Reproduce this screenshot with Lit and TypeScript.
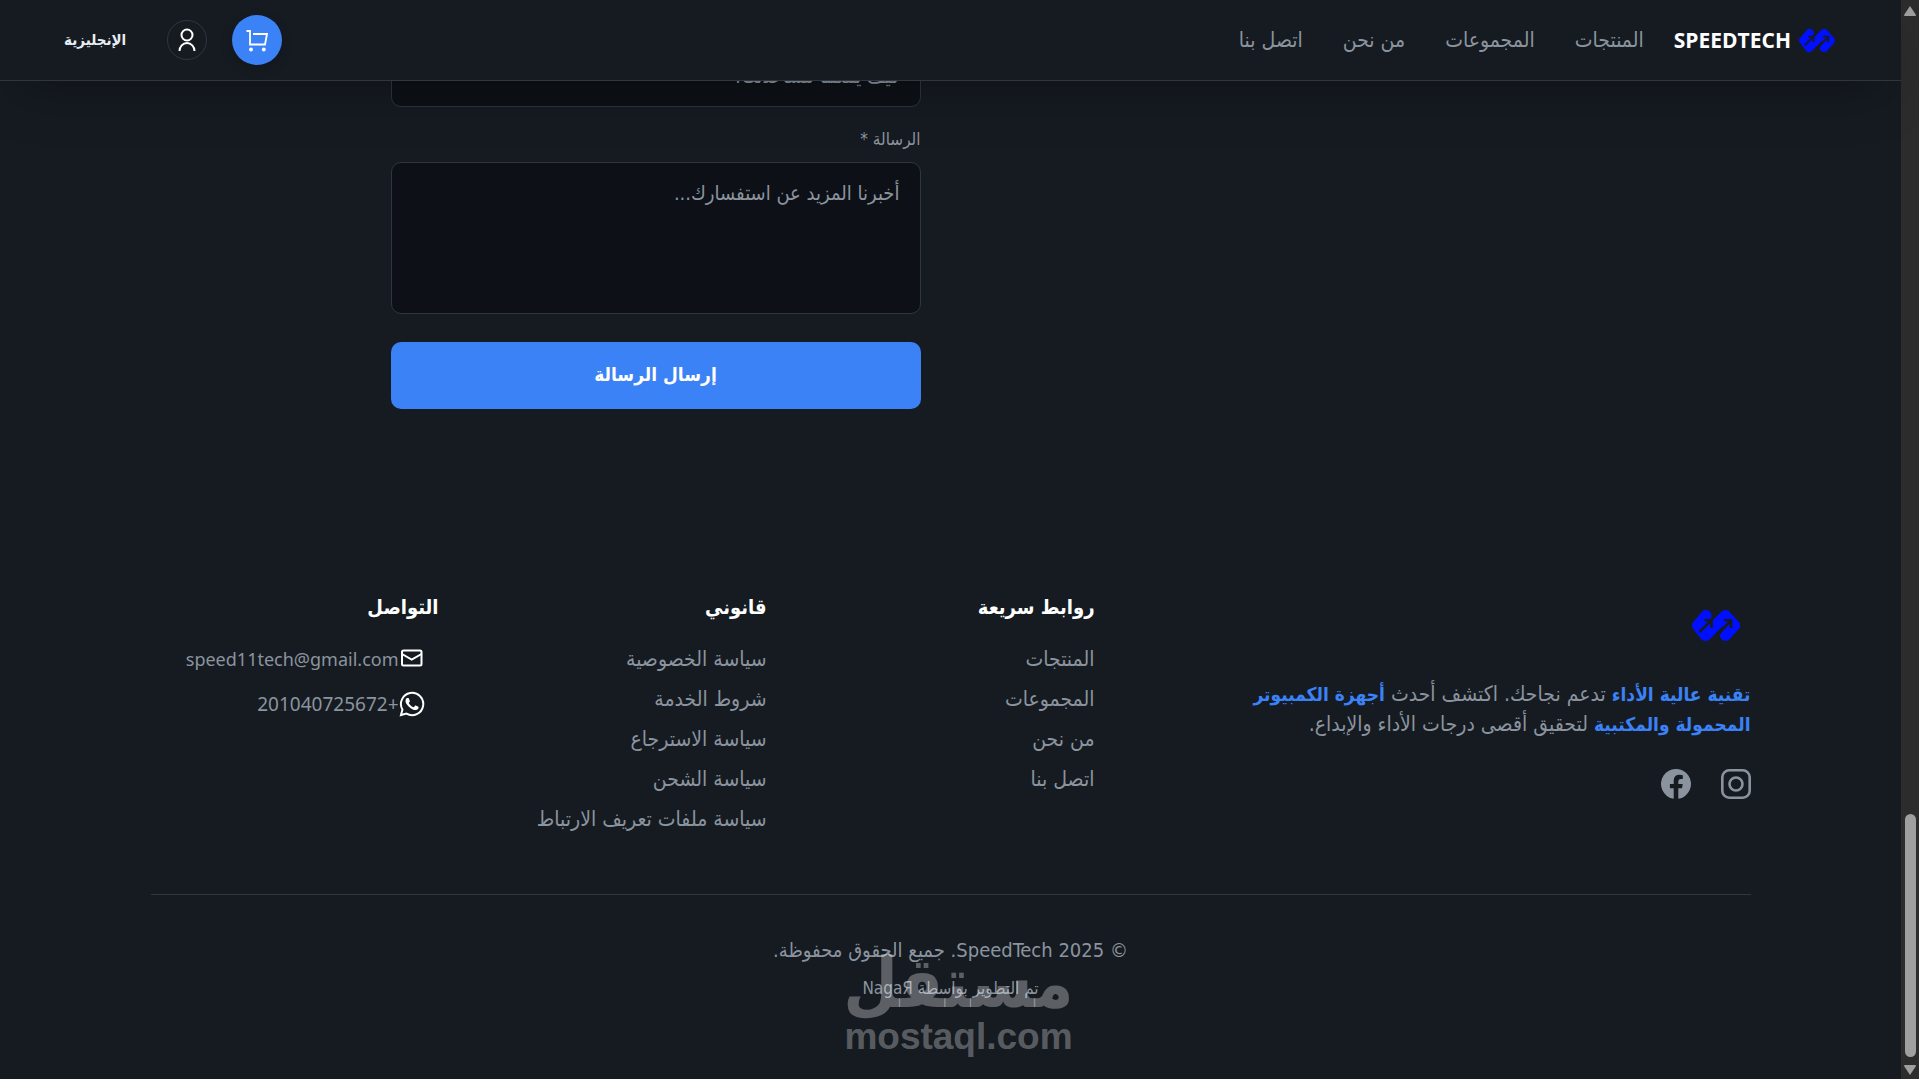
import { LitElement, html, css } from "lit";
import { customElement } from "lit/decorators.js";

const logo = html`<svg class="logo" viewBox="0 0 48 31" aria-hidden="true">
  <path d="M14 5.500 5.500 15.500 13.500 25.500 33.500 5.500 42.500 15.500 33.500 25.500" fill="none" stroke="#0010ff" stroke-width="11" stroke-linecap="round" stroke-linejoin="round"/>
  <path d="M6 15.500 14 6 17 12 12 25zM33 6 42 15.500 34 25 30 12z" fill="#0010ff"/>
  <g fill="none" stroke="#161b22" stroke-width="2.600"><path d="M7.500 22 18.500 11M12.500 10.300h7V18"/><path d="M24.500 26 38.500 11M32 10.300h7V18"/></g>
</svg>`;

@customElement("app-root")
export class AppRoot extends LitElement {
  static styles = css`
    :host {
      display: flex;
      height: 100vh;
      overflow: hidden;
      direction: rtl;
      background: #161b22;
      color: #8b949e;
      font-family: "DejaVu Sans Condensed", "DejaVu Sans", sans-serif;
      font-size: 21px;
      line-height: 30px;
    }
    * { box-sizing: border-box; }
    a { color: inherit; text-decoration: none; }
    svg { display: block; flex: none; }
    .page { flex: 1; min-width: 0; display: flex; flex-direction: column; }
    .header {
      position: relative;
      z-index: 1;
      flex: none;
      display: flex;
      justify-content: space-between;
      align-items: center;
      height: 81px;
      padding: 0 66px 0 64px;
      background: #161b22;
      border-bottom: 1px solid #30363d;
      box-shadow: 0 25px 50px -12px rgba(0, 0, 0, 0.25);
    }
    .main-nav, .brand, .actions, .links { display: flex; align-items: center; }
    .main-nav { gap: 30px; }
    .links { gap: 40px; }
    .brand { gap: 8px; color: #fff; font: bold 21px/30px "Open Sans", sans-serif; }
    .brand .logo { width: 36px; height: 23px; }
    .actions { gap: 25px; }
    .lang { margin-inline-start: 16px; padding: 0; border: 0; background: none; color: #e6edf3; font: bold 15px/30px "DejaVu Sans Condensed", "DejaVu Sans", sans-serif; }
    .round { display: grid; place-items: center; border-radius: 50%; padding: 0; color: #fff; }
    .cart { width: 50px; height: 50px; border: 0; background: #3b82f6; box-shadow: 0 4px 12px rgba(0, 0, 0, 0.2); }
    .user { width: 40px; height: 40px; border: 1px solid #30363d; background: none; }
    .body { flex: 1; min-height: 0; overflow: hidden; display: flex; flex-direction: column; justify-content: flex-end; }
    .contact { flex: none; width: 100%; max-width: 1120px; margin: 0 auto; display: grid; grid-template-columns: 1fr 1fr; column-gap: 60px; padding-bottom: 169px; }
    .form { grid-column: 2; display: flex; flex-direction: column; }
    .label { margin: 20px 0 10px; font-size: 17px; line-height: 25px; }
    .field { width: 100%; display: block; padding: 15px 20px; border: 1px solid #30363d; border-radius: 10px; background: #0d1117; color: #f0f6fc; font: inherit; font-size: 20px; line-height: 30px; resize: none; }
    .field::placeholder { color: #8b949e; opacity: 1; }
    .input { height: 62px; }
    .area { height: 152px; overflow: hidden; }
    .send { height: 67px; margin-top: 28px; padding: 0 0 4px; border: 0; border-radius: 10px; background: #3b82f6; color: #fff; font: bold 19px/30px "DejaVu Sans Condensed", "DejaVu Sans", sans-serif; }
    .footer { flex: none; width: 100%; max-width: 1600px; margin: 0 auto; }
    .columns { display: grid; grid-template-columns: repeat(5, 1fr); column-gap: 40px; padding: 12px 0 60px; border-bottom: 1px solid #30363d; }
    .about { grid-column: span 2; }
    .about .logo { width: 48px; height: 31px; margin: 20px 11px 38px; }
    .text { margin: 0; max-width: 500px; }
    .strong { color: #3b82f6; font-size: 19px; font-weight: bold; }
    .social { display: flex; gap: 30px; margin-top: 30px; }
    .title { margin: 0 0 20px; color: #fff; font-size: 20px; line-height: 34px; white-space: nowrap; }
    .list { margin: 0; padding: 0; list-style: none; display: grid; gap: 10px; white-space: nowrap; }
    .reach { gap: 15px; }
    .row { display: flex; align-items: center; padding-inline-start: 14px; font-family: "Noto Sans", sans-serif; font-size: 18px; }
    .phone { font-size: 19px; }
    .row svg { color: #fff; }
    .legal { position: relative; height: 184px; padding-top: 40px; text-align: center; }
    .legal p { margin: 0; font-size: 20px; }
    .legal .dev { padding-top: 8px; font-size: 17px; }
    .mark { position: absolute; top: 50px; left: 693px; width: 230px; color: rgba(255, 255, 255, 0.3); text-align: center; font-weight: bold; pointer-events: none; }
    .mark-ar { display: block; font-size: 70px; line-height: 76px; white-space: nowrap; }
    .mark-en { display: block; direction: ltr; font-family: "Liberation Sans", sans-serif; font-size: 37px; line-height: 32px; }
    .scroll { flex: none; width: 18px; display: flex; flex-direction: column; align-items: center; padding: 6px 0 4px; background: #2c2c2c; }
    .thumb { width: 11px; height: 243px; margin: auto 0 8px; border-radius: 6px; background: #9f9f9f; }
  `;

  private list(items: string[]) {
    return html`<ul class="list">${items.map((t) => html`<li><a href="#">${t}</a></li>`)}</ul>`;
  }

  render() {
    return html`
      <div class="scroll" aria-hidden="true">
        <svg width="12" height="10" fill="#9f9f9f"><path d="M6 0 12 9Q12 10 11 10H1Q0 10 0 9z"/></svg>
        <div class="thumb"></div>
        <svg width="12" height="10" fill="#9f9f9f"><path d="M6 10 12 1Q12 0 11 0H1Q0 0 0 1z"/></svg>
      </div>
      <div class="page">
        <header class="header">
          <nav class="main-nav">
            <a class="brand" href="#">${logo}<span>SPEEDTECH</span></a>
            <div class="links">
              ${["المنتجات", "المجموعات", "من نحن", "اتصل بنا"].map((t) => html`<a href="#">${t}</a>`)}
            </div>
          </nav>
          <div class="actions">
            <button class="round cart" aria-label="السلة">
              <svg width="24" height="24" viewBox="0 0 24 24" fill="none" stroke="currentColor" stroke-width="1.800"><path d="M1.500 3h3.500v13.500h15L22 6H8"/><circle cx="6" cy="21.500" r="1.900" fill="currentColor" stroke="none"/><circle cx="18.800" cy="21.500" r="1.900" fill="currentColor" stroke="none"/></svg>
            </button>
            <button class="round user" aria-label="الحساب">
              <svg width="24" height="24" viewBox="0 0 24 24" fill="none" stroke="currentColor" stroke-width="2"><circle cx="12" cy="7" r="5.500"/><path d="M4.500 23a7.500 8 0 0 1 15 0"/></svg>
            </button>
            <button class="lang">الإنجليزية</button>
          </div>
        </header>
        <div class="body">
          <main class="contact">
            <form class="form">
              <input class="field input" aria-label="الموضوع" placeholder="كيف يمكننا مساعدتك؟" />
              <label class="label" for="message">الرسالة *</label>
              <textarea class="field area" id="message" placeholder="أخبرنا المزيد عن استفسارك..."></textarea>
              <button class="send" type="button">إرسال الرسالة</button>
            </form>
          </main>
          <footer class="footer">
            <div class="columns">
              <section class="about">
                ${logo}
                <p class="text"><span class="strong">تقنية عالية الأداء</span> تدعم نجاحك. اكتشف أحدث <span class="strong">أجهزة الكمبيوتر المحمولة والمكتبية</span> لتحقيق أقصى درجات الأداء والإبداع.</p>
                <div class="social">
                  <a href="#" aria-label="Instagram"><svg width="30" height="30" viewBox="0 0 30 30" fill="none" stroke="currentColor" stroke-width="2.600"><rect x="1.300" y="1.300" width="27.400" height="27.400" rx="7"/><circle cx="15" cy="15" r="6.500"/></svg></a>
                  <a href="#" aria-label="Facebook"><svg width="30" height="30" viewBox="0 0 30 30" fill="currentColor"><path d="M12.700 29.800A15 15 0 1 1 17.300 29.800V19.300h3.700l.7-4.300h-4.400v-2.700q0-2.400 2.500-2.400h2V6.200q-8.900-1.900-9.100 5.300V15H8.900v4.300h3.800z"/></svg></a>
                </div>
              </section>
              <section><h3 class="title">روابط سريعة</h3>${this.list(["المنتجات", "المجموعات", "من نحن", "اتصل بنا"])}</section>
              <section><h3 class="title">قانوني</h3>${this.list(["سياسة الخصوصية", "شروط الخدمة", "سياسة الاسترجاع", "سياسة الشحن", "سياسة ملفات تعريف الارتباط"])}</section>
              <section>
                <h3 class="title">التواصل</h3>
                <div class="list reach">
                  <a class="row" href="#"><svg width="26" height="26" viewBox="0 0 26 26" fill="none" stroke="currentColor" stroke-width="2"><rect x="3" y="4.500" width="19.500" height="15" rx="1.500"/><path d="M3 8 12.700 13.500 22.500 8"/></svg>speed11tech@gmail.com</a>
                  <a class="row phone" href="#"><svg width="26" height="26" viewBox="0 0 24 24" fill="currentColor"><path d="M17.472 14.382c-.297-.149-1.758-.867-2.030-.967-.273-.099-.471-.148-.670.150-.197.297-.767.966-.940 1.164-.173.199-.347.223-.644.075-.297-.150-1.255-.463-2.390-1.475-.883-.788-1.480-1.761-1.653-2.059-.173-.297-.018-.458.130-.606.134-.133.298-.347.446-.520.149-.174.198-.298.298-.497.099-.198.050-.371-.025-.520-.075-.149-.669-1.612-.916-2.207-.242-.579-.487-.5-.669-.510-.173-.008-.371-.010-.570-.010-.198 0-.520.074-.792.372-.272.297-1.040 1.016-1.040 2.479 0 1.462 1.065 2.875 1.213 3.074.149.198 2.096 3.200 5.077 4.487.709.306 1.262.489 1.694.625.712.227 1.360.195 1.871.118.571-.085 1.758-.719 2.006-1.413.248-.694.248-1.289.173-1.413-.074-.124-.272-.198-.570-.347"/><path d="M1.800 22.200 3.200 17.200A10.300 10.300 0 1 1 6.900 20.900z" fill="none" stroke="currentColor" stroke-width="1.800"/></svg>+201040725672</a>
                </div>
              </section>
            </div>
            <div class="legal">
              <p>© 2025 SpeedTech. جميع الحقوق محفوظة.</p>
              <p class="dev">تم التطوير بواسطة NagaЯ</p>
              <div class="mark"><span class="mark-ar">مستقل</span><span class="mark-en">mostaql.com</span></div>
            </div>
          </footer>
        </div>
      </div>
    `;
  }
}
